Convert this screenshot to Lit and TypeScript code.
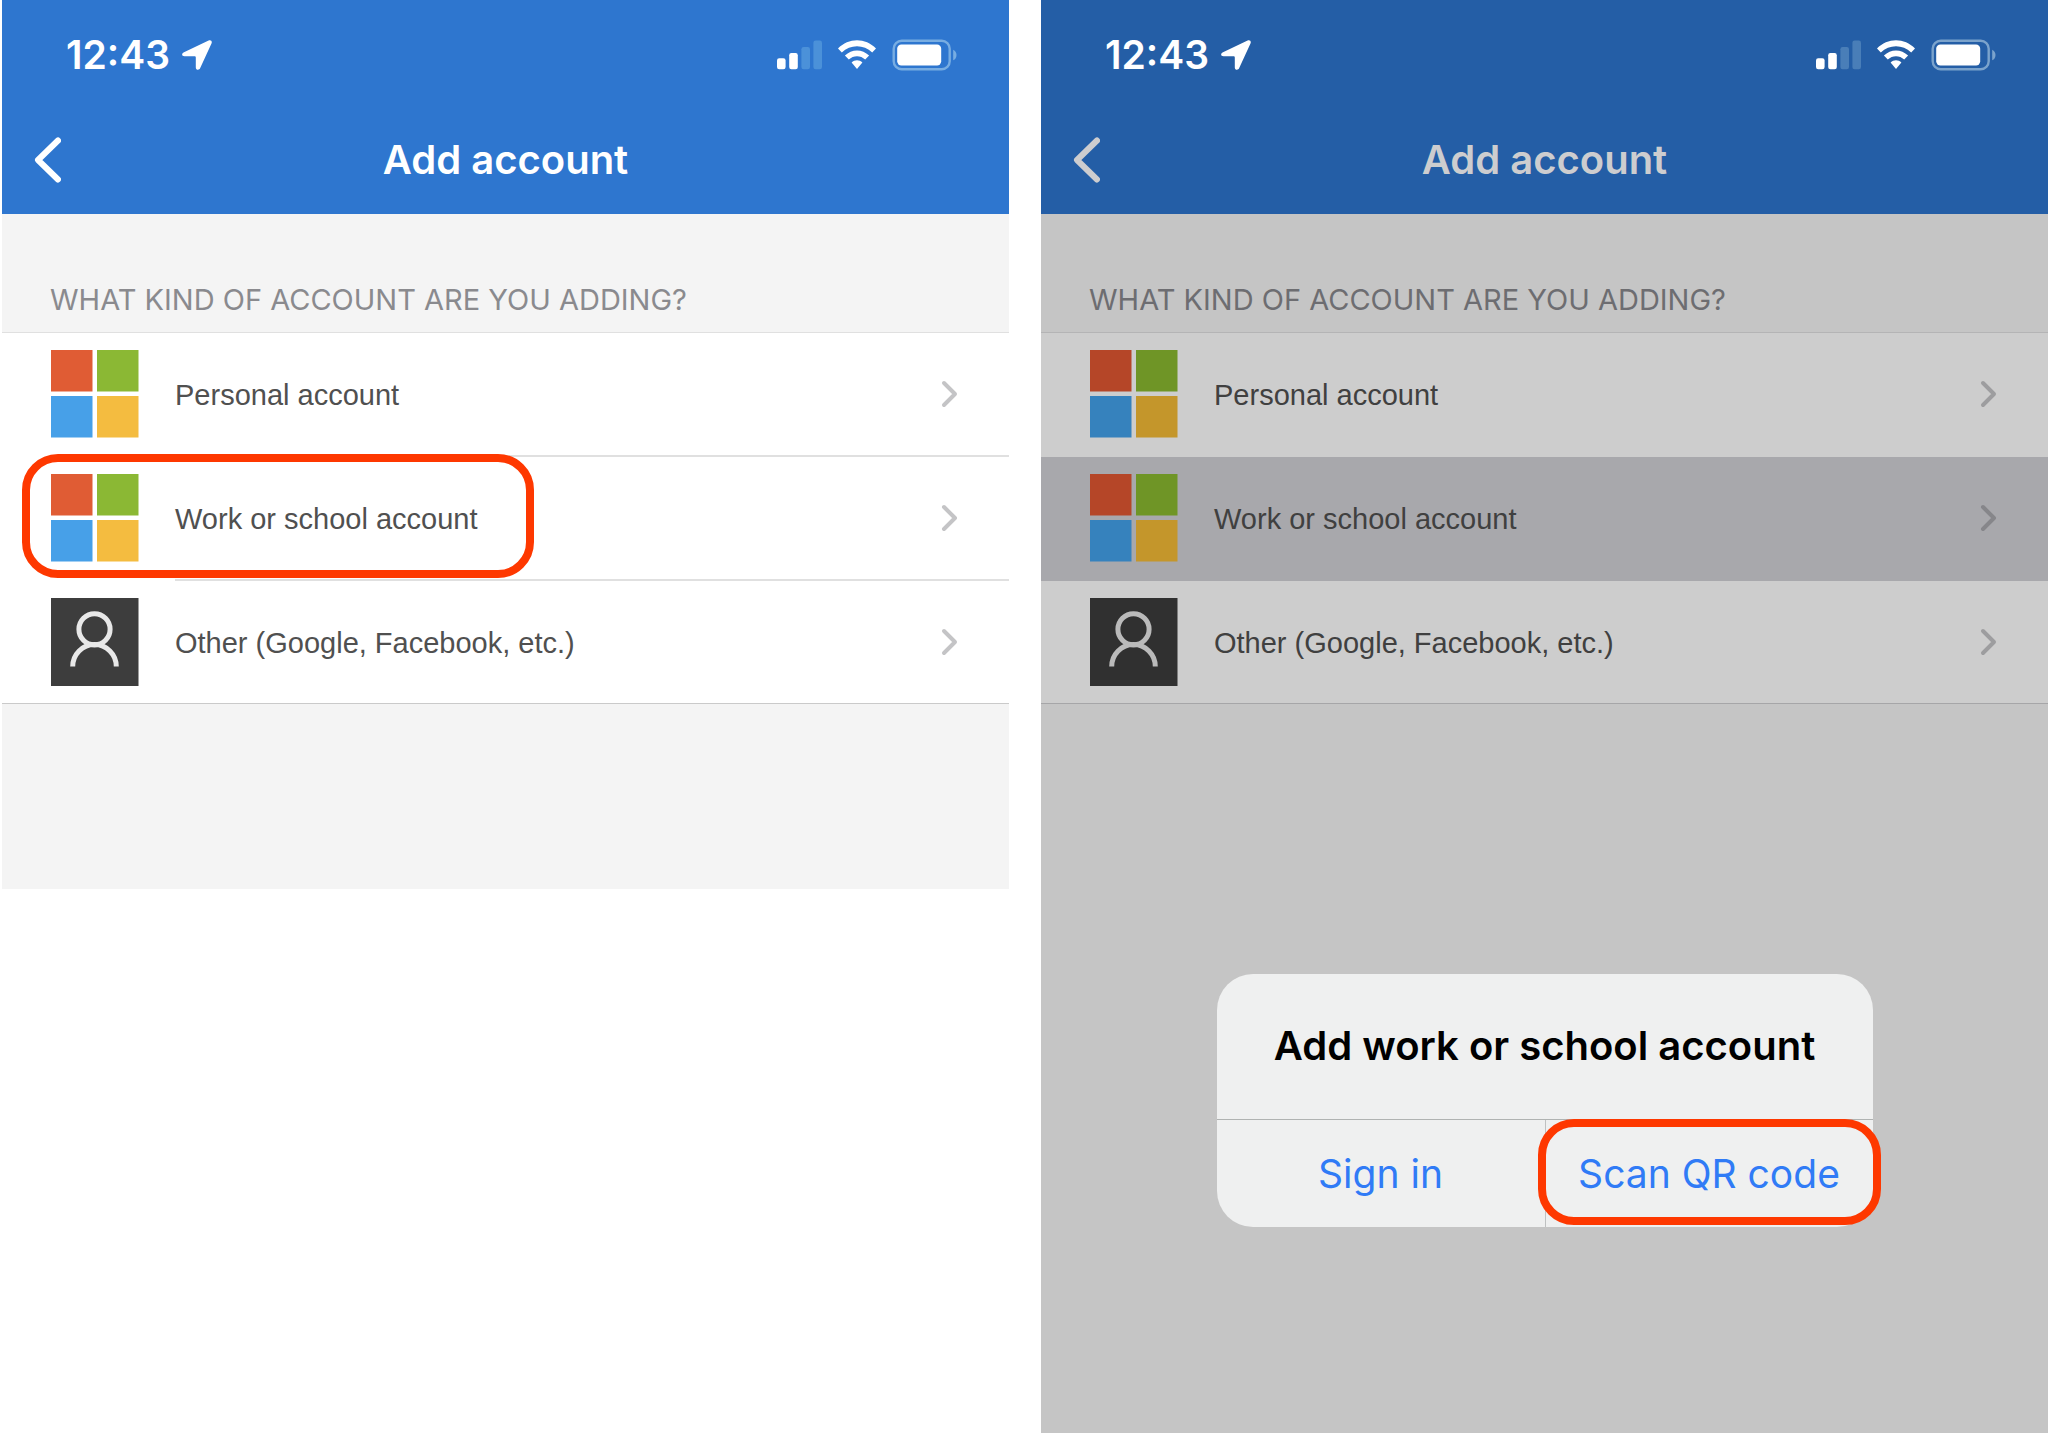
import { LitElement, html, svg, css } from "lit";
import { customElement, property } from "lit/decorators.js";

type IconName = "microsoft" | "person";

interface AccountKind {
  id: string;
  label: string;
  icon: IconName;
}

const ACCOUNT_KINDS: AccountKind[] = [
  { id: "personal", label: "Personal account", icon: "microsoft" },
  { id: "work", label: "Work or school account", icon: "microsoft" },
  { id: "other", label: "Other (Google, Facebook, etc.)", icon: "person" },
];

const microsoftIcon = svg`
  <rect class="red" x="0" y="0" width="41.5" height="41.5" />
  <rect class="green" x="46" y="0" width="41.5" height="41.5" />
  <rect class="blue" x="0" y="46" width="41.5" height="41.5" />
  <rect class="yellow" x="46" y="46" width="41.5" height="41.5" />`;

const personIcon = svg`
  <rect class="tile" width="87.500" height="88" />
  <g class="figure">
    <circle cx="43.500" cy="31.300" r="15.600" />
    <path d="M21.700 68.500A21.800 22 0 0 1 65.300 68.500" />
  </g>`;

@customElement("status-bar")
class StatusBar extends LitElement {
  static styles = css`
    :host {
      display: flex;
      align-items: center;
      justify-content: space-between;
      height: 110px;
      padding: 0 51px 0 64px;
      color: #fff;
    }
    .clock {
      display: flex;
      align-items: center;
      gap: 12px;
      font-size: 39px;
      line-height: 48px;
      font-weight: 600;
    }
    .indicators {
      display: flex;
      align-items: center;
      gap: 16px;
    }
    svg {
      display: block;
      fill: currentColor;
    }
    .faint {
      fill: var(--signal-off);
    }
    .outline {
      fill: none;
      stroke: var(--battery-rim);
      stroke-width: 2.4;
    }
    .nub {
      fill: var(--battery-rim);
    }
  `;

  render() {
    return html`
      <div class="clock">
        <time>12:43</time>
        <svg width="30" height="30" viewBox="0 0 30 30" aria-hidden="true">
          <path
            d="M2 12.3 26.6.4C28.8-.5 30.4 1 29.6 3.2L18.1 28.3C17 30.6 13.8 30 13.8 27.4V17.6C13.8 16.8 13.3 16.3 12.5 16.3H2.5C-.4 16.2-.7 13.5 2 12.3Z"
          />
        </svg>
      </div>
      <div class="indicators">
        <svg width="45" height="30" viewBox="0 0 45 30" aria-hidden="true">
          <rect x="0" y="18.2" width="8.6" height="11" rx="2.2" />
          <rect x="12.2" y="13" width="8.6" height="16.2" rx="2.2" />
          <rect class="faint" x="24.4" y="7" width="8.6" height="22.2" rx="2.2" />
          <rect class="faint" x="36.4" y="0.6" width="8.6" height="28.6" rx="2.2" />
        </svg>
        <svg width="38" height="30" viewBox="0 0 38 30" aria-hidden="true">
          <path d="M0 8.6C10.5-2.4 27.5-2.4 38 8.6L34.2 12.5C25.8 4 12.2 4 3.8 12.5Z" />
          <path d="M6.9 15.6C13.6 8.7 24.4 8.7 31.1 15.6L27.2 19.6C22.6 15 15.4 15 10.8 19.6Z" />
          <path d="M13.6 22.4C16.6 19.6 21.4 19.6 24.4 22.4L19 29Z" />
        </svg>
        <svg width="66" height="32" viewBox="0 0 66 32" aria-hidden="true">
          <rect class="outline" x="1.7" y="1.7" width="56" height="28.6" rx="8" />
          <rect x="5.2" y="5.6" width="44" height="20.8" rx="4.2" />
          <path class="nub" d="M61.2 10.7C65.6 12.7 65.600 19.3 61.2 21.3Z" />
        </svg>
      </div>
    `;
  }
}

@customElement("account-screen")
class AccountScreen extends LitElement {
  @property() selected = "";
  @property() marked = "";

  static styles = css`
    :host {
      --signal-off: #4b91d9;
      --battery-rim: #78ade2;
      --bar: #2e76cf;
      --bar-text: #fff;
      --canvas: #f4f4f4;
      --row: #fff;
      --row-selected: #a8a8ac;
      --line: #e0e0e0;
      --line-end: #cacaca;
      --heading: #8a8a8e;
      --text: #505050;
      --chevron: #c4c4c6;
      --red: #e05c34;
      --green: #8bb834;
      --blue: #47a0e8;
      --yellow: #f4bc40;
      --tile: #3d3d3d;
      --figure: #e8e8e8;
      display: block;
      position: relative;
      background: var(--canvas);
    }
    :host([dimmed]) {
      --signal-off: #497eb8;
      --battery-rim: #7ba3cc;
      --bar: #245ea6;
      --bar-text: #cdcdcf;
      --canvas: #c5c5c5;
      --row: #cdcdcd;
      --line: #b4b4b5;
      --line-end: #a6a6a8;
      --heading: #6d6d71;
      --text: #404040;
      --chevron: #9d9d9f;
      --red: #b54628;
      --green: #6f9526;
      --blue: #3682bd;
      --yellow: #c4962b;
      --tile: #303030;
      --figure: #bababa;
    }
    .top {
      background: var(--bar);
    }
    .navbar {
      display: grid;
      grid-template-columns: 96px 1fr 96px;
      align-items: center;
      height: 104px;
      color: var(--bar-text);
    }
    h1,
    h2,
    ul {
      margin: 0;
      padding: 0;
    }
    h1 {
      padding-bottom: 4px;
      font-size: 40px;
      line-height: 48px;
      font-weight: 600;
      text-align: center;
    }
    button {
      appearance: none;
      border: 0;
      margin: 0;
      padding: 0;
      background: none;
      color: inherit;
      font: inherit;
      text-align: left;
      cursor: pointer;
    }
    .back {
      padding: 24px 32px 28px 31px;
    }
    svg {
      display: block;
      flex: none;
    }
    .arrow {
      fill: none;
      stroke: currentColor;
      stroke-linecap: round;
      stroke-linejoin: round;
    }
    .heading {
      padding: 69px 48px 15px;
      color: var(--heading);
      font-size: 29px;
      line-height: 34px;
      font-weight: 400;
    }
    .list {
      list-style: none;
      background: var(--row);
      border-top: 1px solid var(--line);
      border-bottom: 1px solid var(--line-end);
    }
    .item {
      position: relative;
    }
    .item:not(:last-child)::after {
      content: "";
      display: block;
      height: 2px;
      margin-left: 173px;
      background: var(--line);
    }
    .item.current {
      background: var(--row-selected);
    }
    .item.current .arrow {
      color: #86868a;
    }
    .item.current::after {
      visibility: hidden;
    }
    .item:has(+ .current)::after {
      visibility: hidden;
    }
    .row {
      display: flex;
      align-items: center;
      width: 100%;
      min-height: 122px;
      padding: 0 51px 0 49px;
      color: var(--text);
      font-family: "Liberation Sans", Arial, sans-serif;
      font-size: 29px;
      line-height: 36px;
    }
    .label {
      flex: 1;
      padding: 2px 0 0 36px;
    }
    .row .arrow {
      color: var(--chevron);
    }
    .item.current .row .arrow {
      color: #86868a;
    }
    .mark {
      position: absolute;
      inset: -3px auto auto 20px;
      box-sizing: border-box;
      width: 512px;
      height: 124px;
      border: 8px solid #fe3800;
      border-radius: 36px;
      pointer-events: none;
    }
    .red {
      fill: var(--red);
    }
    .green {
      fill: var(--green);
    }
    .blue {
      fill: var(--blue);
    }
    .yellow {
      fill: var(--yellow);
    }
    .tile {
      fill: var(--tile);
    }
    .figure {
      fill: none;
      stroke: var(--figure);
      stroke-width: 5;
    }
  `;

  private renderItem(kind: AccountKind) {
    const current = kind.id === this.selected;
    return html`
      <li class="item ${current ? "current" : ""}">
        <button class="row" type="button">
          <svg width="88" height="88" viewBox="0 0 88 88" aria-hidden="true">
            ${kind.icon === "microsoft" ? microsoftIcon : personIcon}
          </svg>
          <span class="label">${kind.label}</span>
          <svg class="arrow" width="17" height="28" viewBox="0 0 17 28" stroke-width="4" aria-hidden="true">
            <path d="M3 3 14 14 3 25" />
          </svg>
        </button>
        ${kind.id === this.marked ? html`<span class="mark"></span>` : null}
      </li>
    `;
  }

  render() {
    return html`
      <header class="top">
        <status-bar></status-bar>
        <div class="navbar">
          <button class="back" type="button" aria-label="Back">
            <svg class="arrow" width="28" height="48" viewBox="0 0 28 48" stroke-width="6" aria-hidden="true">
              <path d="M25 4.500 5 24 25 43.500" />
            </svg>
          </button>
          <h1>Add account</h1>
        </div>
      </header>
      <h2 class="heading">WHAT KIND OF ACCOUNT ARE YOU ADDING?</h2>
      <ul class="list">
        ${ACCOUNT_KINDS.map((kind) => this.renderItem(kind))}
      </ul>
      <slot></slot>
    `;
  }
}

@customElement("sign-in-dialog")
class SignInDialog extends LitElement {
  static styles = css`
    :host {
      display: block;
      width: 656px;
      border-radius: 36px;
      background: #eff0f0;
    }
    .title {
      margin: 0;
      padding: 48px 24px 49px;
      color: #000;
      font-size: 40px;
      line-height: 48px;
      font-weight: 600;
      text-align: center;
      white-space: nowrap;
    }
    .actions {
      display: grid;
      grid-template-columns: 1fr 1fr;
      border-top: 1px solid #b0b3b2;
    }
    .cell {
      position: relative;
    }
    .cell + .cell {
      border-left: 1px solid #bfc1c1;
    }
    .action {
      appearance: none;
      display: block;
      width: 100%;
      margin: 0;
      padding: 31px 0 30px;
      border: 0;
      background: none;
      color: #307bf6;
      font: inherit;
      font-size: 39px;
      line-height: 46px;
      text-align: center;
      white-space: nowrap;
      cursor: pointer;
    }
    .mark {
      position: absolute;
      inset: -1px -8px 2px;
      border: 8px solid #fe3800;
      border-radius: 36px;
      pointer-events: none;
    }
  `;

  render() {
    return html`
      <div role="dialog" aria-labelledby="title">
        <h2 class="title" id="title">Add work or school account</h2>
        <div class="actions">
          <div class="cell"><button class="action" type="button">Sign in</button></div>
          <div class="cell">
            <button class="action" type="button">Scan QR code</button>
            <span class="mark"></span>
          </div>
        </div>
      </div>
    `;
  }
}

@customElement("app-root")
class AppRoot extends LitElement {
  static styles = css`
    :host {
      display: grid;
      grid-template-columns: 1fr 1fr;
      gap: 32px;
      align-items: start;
      box-sizing: border-box;
      min-height: 100vh;
      padding-left: 2px;
      overflow: hidden;
      background: #fff;
      font-family: Inter, "Liberation Sans", sans-serif;
    }
    .start {
      padding-bottom: 185px;
    }
    .choice {
      align-self: stretch;
    }
    .popup {
      position: absolute;
      top: 974px;
      left: 50%;
      transform: translateX(-50%);
    }
  `;

  render() {
    return html`
      <account-screen class="start" marked="work"></account-screen>
      <account-screen class="choice" selected="work" dimmed>
        <sign-in-dialog class="popup"></sign-in-dialog>
      </account-screen>
    `;
  }
}
